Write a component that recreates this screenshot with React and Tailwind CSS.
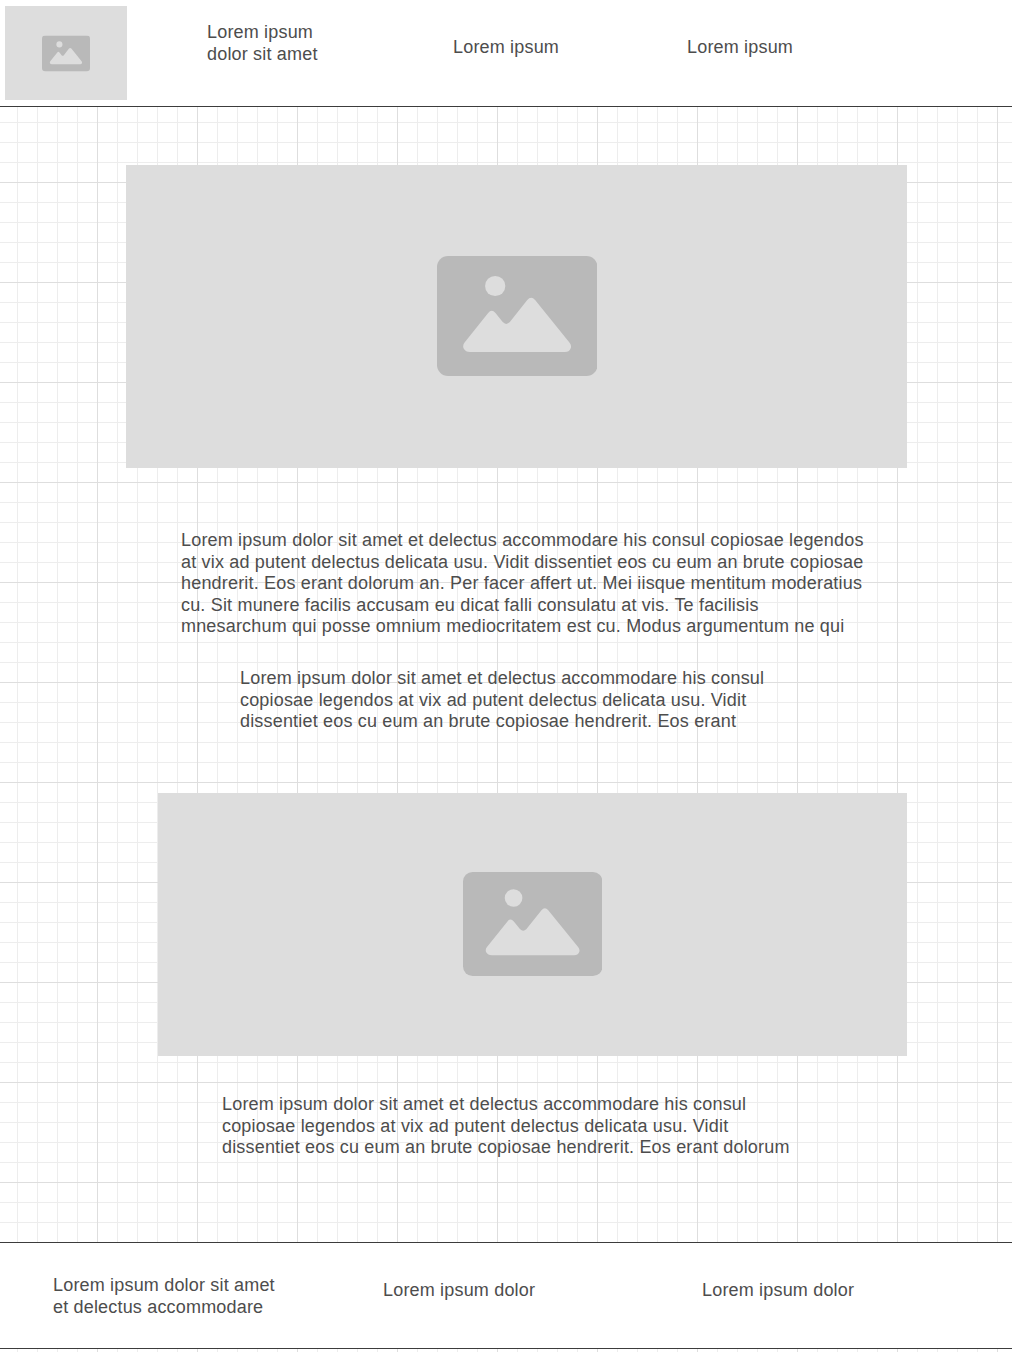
function ImageIcon({ className }) {
  return (
    <svg viewBox="0 0 160 120" preserveAspectRatio="none" className={className} aria-hidden="true">
      <rect width="160" height="120" rx="11" fill="#b9b9b9" />
      <circle cx="58" cy="30" r="10.1" fill="#dddddd" />
      <path
        d="M27.5 86.5 L51 57 Q54.500 52.500 58.300 57 L65.300 65.800 Q69 70 72.800 65.800 L90 44 Q93.800 39.500 97.800 44 L132 86.500 Q134.500 89.500 133.200 92.500 Q131.800 96 127.500 96 H33 Q28.500 96 26.600 92.500 Q25.200 89.500 27.500 86.500 Z"
        fill="#dddddd"
      />
    </svg>
  );
}

function Placeholder({ className, iconClass }) {
  return (
    <div className={`flex items-center justify-center bg-[#dddddd] ${className}`}>
      <ImageIcon className={iconClass} />
    </div>
  );
}

function Lines({ lines, className }) {
  return (
    <p className={`whitespace-nowrap ${className}`}>
      {lines.map((line) => (
        <span key={line} className="block">
          {line}
        </span>
      ))}
    </p>
  );
}

const GRID =
  "bg-white bg-[linear-gradient(to_right,#dedede_1px,transparent_1px),linear-gradient(to_bottom,#dedede_1px,transparent_1px),linear-gradient(to_right,#ededed_1px,transparent_1px),linear-gradient(to_bottom,#ededed_1px,transparent_1px)] bg-[size:100px_100px,100px_100px,20px_20px,20px_20px] bg-[position:-3px_-18px]";

export default function App() {
  return (
    <div
      className={`flex h-[1352px] w-[1012px] flex-col overflow-hidden font-['Liberation_Sans',Arial,sans-serif] text-[18px] leading-[21.6px] tracking-[0.18px] text-[#4d4d4d] ${GRID}`}
    >
      <header className="flex h-[107px] shrink-0 items-start border-b border-[#3c3c3c] bg-white pl-[5px]">
        <Placeholder className="mt-1.5 h-[94px] w-[122px]" iconClass="h-9 w-12 translate-y-[0.4px]" />
        <Lines className="mt-[22px] ml-20 w-[246px]" lines={["Lorem ipsum", "dolor sit amet"]} />
        <Lines className="mt-[37px] w-[234px]" lines={["Lorem ipsum"]} />
        <Lines className="mt-[37px]" lines={["Lorem ipsum"]} />
      </header>

      <main className="flex h-[1135px] shrink-0 flex-col items-start pt-[58px]">
        <Placeholder className="ml-[126px] h-[303px] w-[781px] pb-px pl-px" iconClass="h-[120px] w-[160.5px]" />
        <Lines
          className="mt-[62px] ml-[181px] h-[138px]"
          lines={[
            "Lorem ipsum dolor sit amet et delectus accommodare his consul copiosae legendos",
            "at vix ad putent delectus delicata usu. Vidit dissentiet eos cu eum an brute copiosae",
            "hendrerit. Eos erant dolorum an. Per facer affert ut. Mei iisque mentitum moderatius",
            "cu. Sit munere facilis accusam eu dicat falli consulatu at vis. Te facilisis",
            "mnesarchum qui posse omnium mediocritatem est cu. Modus argumentum ne qui",
          ]}
        />
        <Lines
          className="ml-[240px] h-[125px]"
          lines={[
            "Lorem ipsum dolor sit amet et delectus accommodare his consul",
            "copiosae legendos at vix ad putent delectus delicata usu. Vidit",
            "dissentiet eos cu eum an brute copiosae hendrerit. Eos erant",
          ]}
        />
        <Placeholder className="ml-[158px] h-[263px] w-[749px] pb-px" iconClass="h-[104px] w-[139.5px]" />
        <Lines
          className="mt-[38px] ml-[222px]"
          lines={[
            "Lorem ipsum dolor sit amet et delectus accommodare his consul",
            "copiosae legendos at vix ad putent delectus delicata usu. Vidit",
            "dissentiet eos cu eum an brute copiosae hendrerit. Eos erant dolorum",
          ]}
        />
      </main>

      <footer className="flex h-[107px] shrink-0 items-start border-y border-[#3c3c3c] bg-white pl-[53px]">
        <Lines className="mt-8 w-[330px]" lines={["Lorem ipsum dolor sit amet", "et delectus accommodare"]} />
        <Lines className="mt-[37px] w-[319px]" lines={["Lorem ipsum dolor"]} />
        <Lines className="mt-[37px]" lines={["Lorem ipsum dolor"]} />
      </footer>
    </div>
  );
}
